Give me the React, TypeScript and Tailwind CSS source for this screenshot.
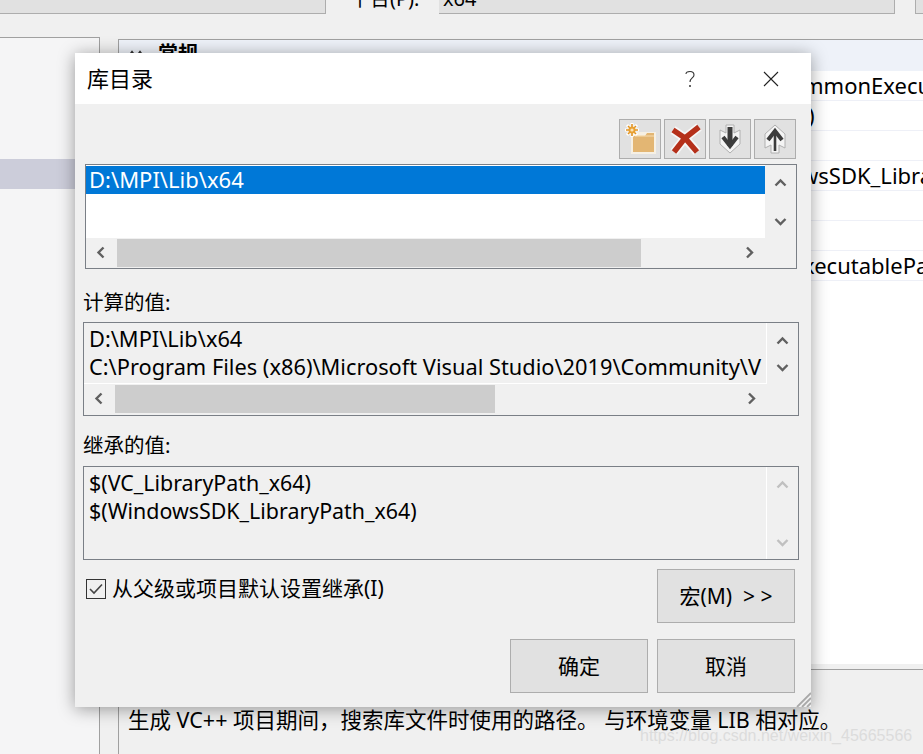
import React from "react";

const FONT = { fontFamily: '"Noto Sans", "Noto Sans CJK SC", sans-serif' };

function Chevron({ dir, muted }: { dir: "up" | "down" | "left" | "right"; muted?: boolean }) {
  const d = {
    up: "M1.5 8.5 L6.5 3.5 L11.5 8.5",
    down: "M1.5 4 L6.5 9 L11.5 4",
    left: "M8.5 1.5 L3.5 6.5 L8.5 11.5",
    right: "M4 1.5 L9 6.5 L4 11.5",
  }[dir];
  return (
    <svg width="13" height="13" viewBox="0 0 13 13" fill="none" className="shrink-0">
      <path d={d} stroke={muted ? "#c0c0c0" : "#606060"} strokeWidth="2.4" />
    </svg>
  );
}

function ToolButton({ children }: { children: React.ReactNode }) {
  return (
    <div className="flex h-[40px] w-[42px] items-center justify-center border border-[#adadad] bg-[#e1e1e1]">
      {children}
    </div>
  );
}

function VScroll({ muted }: { muted?: boolean }) {
  return (
    <div className="flex w-[31px] flex-col items-center justify-between pb-[10px] pt-[12px]">
      <Chevron dir="up" muted={muted} />
      <Chevron dir="down" muted={muted} />
    </div>
  );
}

function HScroll({ thumb, leftPad }: { thumb: number; leftPad: number }) {
  return (
    <div className="flex h-[29px] items-center">
      <div className="flex h-full items-center justify-center" style={{ width: leftPad }}>
        <Chevron dir="left" />
      </div>
      <div className="h-[28px] bg-[#cdcdcd]" style={{ width: thumb }} />
      <div className="flex-1" />
      <div className="mr-[40px]">
        <Chevron dir="right" />
      </div>
    </div>
  );
}

function Btn({ children }: { children: React.ReactNode }) {
  return (
    <div className="flex h-[54px] w-[138px] items-center justify-center whitespace-pre border border-[#adadad] bg-[#e1e1e1] pt-[2px] text-[21px] text-black">
      {children}
    </div>
  );
}

function Row({ children, pl }: { children?: React.ReactNode; pl?: number }) {
  return (
    <div
      className="h-[30px] shrink-0 overflow-hidden whitespace-nowrap border-b border-[#eef0f7] text-[22px] leading-[28px]"
      style={{ paddingLeft: pl }}
    >
      {children}
    </div>
  );
}

export default function App() {
  return (
    <div
      className="relative h-[754px] w-[923px] overflow-hidden bg-[#f0f0f0] text-[22px] text-black"
      style={FONT}
    >
      {/* top fields */}
      <div className="flex h-[14px]">
        <div className="h-[14px] w-[326px] shrink-0 border-b border-r border-[#adadad] bg-[#e1e1e1]" />
        <div className="ml-[24px] h-[14px] w-[89px] shrink-0 overflow-hidden whitespace-nowrap text-[20px] leading-[14px]">
          <div className="-mt-[8px]">平台(P):</div>
        </div>
        <div className="h-[14px] w-[456px] shrink-0 overflow-hidden border-b border-r border-[#adadad] bg-[#e1e1e1] pl-[4px] text-[20px] leading-[14px]">
          <div className="-mt-[8px]">x64</div>
        </div>
        <div className="ml-[20px] h-[14px] flex-1 border-b border-l border-[#adadad] bg-[#e1e1e1]" />
      </div>

      {/* page behind the dialog */}
      <div className="mt-[23px] flex h-[717px]">
        <div className="w-[100px] shrink-0 border-r border-t border-[#a0a0a0] bg-[#f5f5f6] pt-[121px]">
          <div className="h-[30px] bg-[#cccdda]" />
        </div>
        <div className="ml-[18px] mt-[2px] flex min-w-0 flex-1 flex-col">
          <div className="flex h-[625px] flex-col border-l border-t border-[#a0a0a0] bg-white">
            <div className="flex h-[31px] shrink-0 items-start bg-[#eef2f9]">
              <svg width="16" height="8" viewBox="0 0 16 8" className="ml-[9px] mt-[9px] shrink-0">
                <path d="M1 7 L4 3 L7 7 M9 7 L12 3 L15 7" stroke="#333" strokeWidth="2" fill="none" />
              </svg>
              <span className="ml-[14px] text-[20px] font-bold leading-[28px]">常规</span>
            </div>
            <Row pl={684}>mmonExecutable</Row>
            <Row pl={689}>)</Row>
            <Row />
            <Row pl={682}>wsSDK_LibraryPath</Row>
            <Row />
            <Row />
            <Row pl={684}>xecutablePath</Row>
          </div>
          <div className="mt-[5px] flex-1 overflow-hidden whitespace-nowrap border-l border-t border-[#a0a0a0] pl-[9px] pt-[35px] text-[21.5px] leading-[30px]">
            生成 VC++ 项目期间，搜索库文件时使用的路径。 与环境变量 LIB 相对应。
          </div>
        </div>
      </div>

      {/* watermark */}
      <div
        className="absolute left-[640px] top-[724px] whitespace-nowrap text-[16px] leading-[24px] text-[#dcdcdc]"
        style={{ fontFamily: '"Liberation Sans", sans-serif' }}
      >
        https://blog.csdn.net/weixin_45665566
      </div>

      {/* dialog */}
      <div className="absolute left-[75px] top-[53px] flex h-[654px] w-[736px] flex-col bg-[#f0f0f0] shadow-[0_2px_16px_rgba(0,0,0,0.38)]">
        <div className="flex h-[51px] shrink-0 items-center bg-white pl-[12px]">
          <span className="text-[22px]">库目录</span>
          <svg width="12" height="18" viewBox="0 0 12 18" className="ml-auto mr-[67px]">
            <path d="M2 4 C2 1 10 0 10 5 C10 8 6 8 6 12" stroke="#333" strokeWidth="1.1" fill="none" />
            <circle cx="6" cy="16" r="1" fill="#333" />
          </svg>
          <svg width="16" height="16" viewBox="0 0 16 16" className="mr-[32px]">
            <path d="M1 1 L15 15 M15 1 L1 15" stroke="#222" strokeWidth="1.1" fill="none" />
          </svg>
        </div>

        <div className="flex justify-end gap-[3px] pr-[15px] pt-[15px]">
          <ToolButton>
            <svg width="36" height="36" viewBox="0 0 36 36">
              <path d="M9 11 H34 V33 H9 Z" fill="#f6f0e4" />
              <path d="M11 15 H23 L25 12 H32 V31 H11 Z" fill="#e3b673" />
              <path d="M13 15 H32" stroke="#f3d7a8" strokeWidth="1.2" />
              <g stroke="#fff" strokeWidth="3">
                <path d="M10 2 V16 M3 9 H17 M5 4 L15 14 M15 4 L5 14" />
              </g>
              <g stroke="#df9222" strokeWidth="1.6">
                <path d="M10 3 V15 M4 9 H16 M6 5 L14 13 M14 5 L6 13" />
              </g>
              <circle cx="10" cy="9" r="3.6" fill="#e8a032" />
              <circle cx="10" cy="9" r="1.6" fill="#fbe2b5" />
            </svg>
          </ToolButton>
          <ToolButton>
            <svg width="36" height="36" viewBox="0 0 36 36">
              <path d="M6 9 L18 17 L32 6 M18 17 L7 31 M18 17 L30 31" stroke="#f6f6f6" strokeWidth="9" fill="none" />
              <path d="M6 9 L18 17 L32 6 M18 17 L7 31 M18 17 L30 31" stroke="#b5301a" strokeWidth="5.5" fill="none" />
            </svg>
          </ToolButton>
          <ToolButton>
            <svg width="26" height="32" viewBox="0 0 26 32">
              <path d="M9 2 H17 V10 L23 7 V21 L13 30 L3 21 V7 L9 10 Z" fill="#f4f4f4" stroke="#b0b0b0" />
              <path d="M13 4 V23" stroke="#3c3c3c" strokeWidth="5" fill="none" />
              <path d="M6 14 L13 23 L20 14" stroke="#3c3c3c" strokeWidth="4" fill="none" />
            </svg>
          </ToolButton>
          <ToolButton>
            <svg width="26" height="32" viewBox="0 0 26 32">
              <path d="M9 30 H17 V22 L23 25 V11 L13 2 L3 11 V25 L9 22 Z" fill="#f4f4f4" stroke="#b0b0b0" />
              <path d="M13 28 V9" stroke="#3c3c3c" strokeWidth="2.6" fill="none" />
              <path d="M6 17 L13 8 L20 17" stroke="#3c3c3c" strokeWidth="4" fill="none" />
            </svg>
          </ToolButton>
        </div>

        {/* editable list */}
        <div className="ml-[10px] mt-[5px] flex h-[105px] w-[712px] shrink-0 flex-col border border-[#7a7f86]">
          <div className="flex h-[73px]">
            <div className="flex-1 bg-white pt-[1px]">
              <div className="h-[28px] bg-[#0078d7] pl-[3px] text-[22px] leading-[27px] text-white">D:\MPI\Lib\x64</div>
            </div>
            <VScroll />
          </div>
          <HScroll thumb={524} leftPad={31} />
        </div>

        <div className="ml-[8px] mt-[19px] text-[20.5px] leading-[28px]">计算的值:</div>

        <div className="ml-[8px] mt-[6px] flex h-[94px] w-[716px] shrink-0 flex-col border border-[#7a7f86]">
          <div className="flex h-[61px]">
            <div className="min-w-0 flex-1 overflow-hidden whitespace-nowrap border-b border-r border-white pl-[5px] pt-[2px] text-[21.8px] leading-[28px]">
              <div>D:\MPI\Lib\x64</div>
              <div>C:\Program Files (x86)\Microsoft Visual Studio\2019\Community\V</div>
            </div>
            <VScroll />
          </div>
          <HScroll thumb={380} leftPad={31} />
        </div>

        <div className="ml-[8px] mt-[15px] text-[20.5px] leading-[28px]">继承的值:</div>

        <div className="ml-[8px] mt-[7px] flex h-[94px] w-[716px] shrink-0 border border-[#7a7f86]">
          <div className="min-w-0 flex-1 overflow-hidden whitespace-nowrap border-r border-white pl-[5px] pt-[2px] text-[21.4px] leading-[28px]">
            <div>$(VC_LibraryPath_x64)</div>
            <div>$(WindowsSDK_LibraryPath_x64)</div>
          </div>
          <VScroll muted />
        </div>

        <div className="mt-[9px] flex justify-between pr-[16px]">
          <div className="ml-[11px] mt-[10px] flex h-[20px] items-center gap-[6px] text-[21px]">
            <div className="flex h-[20px] w-[20px] items-center justify-center border border-[#333] bg-[#f0f0f0]">
              <svg width="14" height="12" viewBox="0 0 14 12">
                <path d="M1 6 L5 10 L13 1.5" stroke="#444" strokeWidth="1.6" fill="none" />
              </svg>
            </div>
            <span className="whitespace-nowrap">从父级或项目默认设置继承(I)</span>
          </div>
          <Btn>宏(M)  &gt; &gt;</Btn>
        </div>

        <div className="mt-[16px] flex justify-end gap-[9px] pr-[16px]">
          <Btn>确定</Btn>
          <Btn>取消</Btn>
        </div>

        <svg width="16" height="16" viewBox="0 0 16 16" className="absolute bottom-0 right-0">
          <path d="M16 2 L2 16 M16 7 L7 16 M16 12 L12 16" stroke="#a8a8a8" strokeWidth="1.8" fill="none" />
        </svg>
      </div>
    </div>
  );
}
